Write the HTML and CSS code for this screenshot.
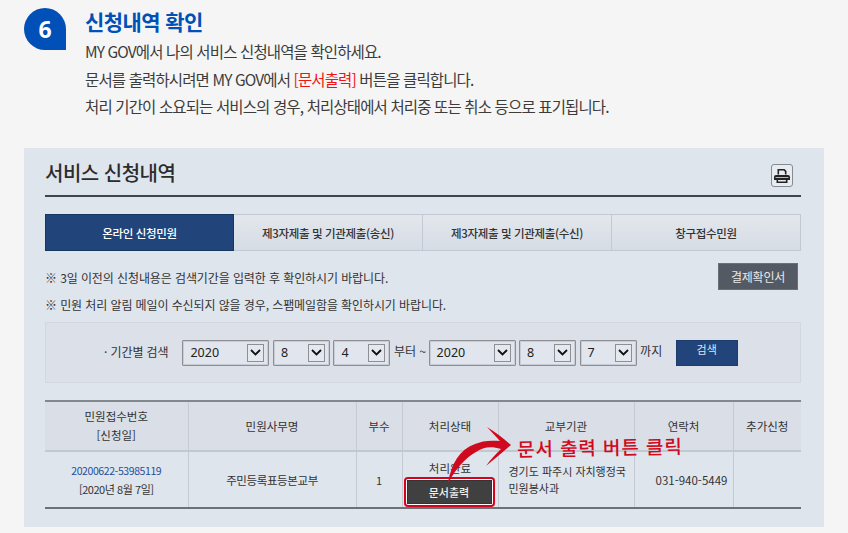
FILE: index.html
```html
<!DOCTYPE html>
<html lang="ko">
<head>
<meta charset="utf-8">
<title>신청내역 확인</title>
<link rel="stylesheet" href="styles.css">
</head>
<body>
<header class="step">
  <div class="badge">6</div>
  <div class="intro">
    <h1>신청내역 확인</h1>
    <p>MY GOV에서 나의 서비스 신청내역을 확인하세요.</p>
    <p>문서를 출력하시려면 MY GOV에서 <em>[문서출력]</em> 버튼을 클릭합니다.</p>
    <p>처리 기간이 소요되는 서비스의 경우, 처리상태에서 처리중 또는 취소 등으로 표기됩니다.</p>
  </div>
</header>
<main class="panel">
  <div class="title-row">
    <h2>서비스 신청내역</h2>
    <button class="print" aria-label="인쇄">
      <svg width="16" height="14" viewBox="0 0 16 14"><path fill="#222" d="M3.500 0h7l2 2v3.500h-1.600V2.700L9.800 1.600H5.100v3.900H3.500zM2 6h12a2 2 0 0 1 2 2v3h-2.500v3h-11v-3H0V8a2 2 0 0 1 2-2zm2.100 5v1.500h7.800V11zM1.600 8.200v.9h12.800v-.9z"/></svg>
    </button>
  </div>
  <nav class="tabs">
    <a class="tab active">온라인 신청민원</a>
    <a class="tab">제3자제출 및 기관제출(송신)</a>
    <a class="tab">제3자제출 및 기관제출(수신)</a>
    <a class="tab">창구접수민원</a>
  </nav>
  <div class="notes">
    <div class="notes-text">
      <p>※ 3일 이전의 신청내용은 검색기간을 입력한 후 확인하시기 바랍니다.</p>
      <p>※ 민원 처리 알림 메일이 수신되지 않을 경우, 스팸메일함을 확인하시기 바랍니다.</p>
    </div>
    <button class="confirm">결제확인서</button>
  </div>
  <form class="search">
    <span class="label">· 기간별 검색</span>
    <span class="sel w-year">2020<i class="arrow"><svg width="11" height="7" viewBox="0 0 11 7"><path d="M1 1l4.500 4.500L10 1" fill="none" stroke="#111" stroke-width="1.800"/></svg></i></span>
    <span class="sel w-small">8<i class="arrow"><svg width="11" height="7" viewBox="0 0 11 7"><path d="M1 1l4.500 4.500L10 1" fill="none" stroke="#111" stroke-width="1.800"/></svg></i></span>
    <span class="sel w-small">4<i class="arrow"><svg width="11" height="7" viewBox="0 0 11 7"><path d="M1 1l4.500 4.500L10 1" fill="none" stroke="#111" stroke-width="1.800"/></svg></i></span>
    <span class="word">부터 ~</span>
    <span class="sel w-year">2020<i class="arrow"><svg width="11" height="7" viewBox="0 0 11 7"><path d="M1 1l4.500 4.500L10 1" fill="none" stroke="#111" stroke-width="1.800"/></svg></i></span>
    <span class="sel w-small">8<i class="arrow"><svg width="11" height="7" viewBox="0 0 11 7"><path d="M1 1l4.500 4.500L10 1" fill="none" stroke="#111" stroke-width="1.800"/></svg></i></span>
    <span class="sel w-small">7<i class="arrow"><svg width="11" height="7" viewBox="0 0 11 7"><path d="M1 1l4.500 4.500L10 1" fill="none" stroke="#111" stroke-width="1.800"/></svg></i></span>
    <span class="word">까지</span>
    <button class="go" type="button">검색</button>
  </form>
  <div class="table-wrap">
    <table>
      <colgroup><col class="c1"><col class="c2"><col class="c3"><col class="c4"><col class="c5"><col class="c6"><col class="c7"></colgroup>
      <thead>
        <tr><th>민원접수번호<br>[신청일]</th><th>민원사무명</th><th>부수</th><th>처리상태</th><th>교부기관</th><th>연락처</th><th>추가신청</th></tr>
      </thead>
      <tbody>
        <tr>
          <td class="rcpt"><a class="num">20200622-53985119</a><br>[2020년 8월 7일]</td>
          <td class="big">주민등록표등본교부</td>
          <td>1</td>
          <td class="state">처리완료<span class="hl"><button class="doc" type="button">문서출력</button></span></td>
          <td class="org">경기도 파주시 자치행정국<br>민원봉사과</td>
          <td class="tel">031-940-5449</td>
          <td></td>
        </tr>
      </tbody>
    </table>
    <svg class="curve" width="70" height="60" viewBox="0 0 70 60"><path fill="#d00a1e" d="M3 57C7 38 14 25 30 19C37 16 44 15 55 16L42 2C50 7 58 13 66 20C58 27 50 34 41 41C46 34 51 29 56 24C46 21 38 22 31 27C20 33 10 45 4 57Z"/></svg>
    <span class="scribble">문서 출력 버튼 클릭</span>
  </div>
</main>
</body>
</html>
```
FILE: styles.css
```css
* { box-sizing: border-box; }
html, body { margin: 0; height: 533px; overflow: hidden; }
body {
  background: #f5f5f5;
  font-family: "Noto Sans CJK KR", "Noto Sans", sans-serif;
  color: #333;
  width: 848px;
}
p, h1, h2 { margin: 0; }
.step { display: flex; padding: 8px 0 0 24px; height: 148px; }
.badge {
  width: 42px; height: 42px;
  background: #0050b8; color: #fff;
  border-radius: 21px 21px 0 21px;
  display: flex; align-items: center; justify-content: center;
  font: 700 23px "Open Sans", sans-serif;
}
.intro { margin-left: 19px; margin-top: -1px; }
.intro h1 { font-size: 21px; line-height: 28px; font-weight: 700; color: #0050b8; letter-spacing: -0.6px; margin-bottom: 3px; }
.intro p { font-size: 15.500px; line-height: 27.500px; letter-spacing: -0.87px; color: #3c3c3c; font-weight: 400; }
.intro em { font-style: normal; color: #f01414; }
.panel { margin: 0 24px; width: 800px; height: 379px; background: #dfe5ed; padding: 0 23px 0 21px; position: relative; }
.title-row { height: 49px; border-bottom: 2px solid #3d4650; display: flex; justify-content: space-between; align-items: flex-start; padding-top: 11px; }
.title-row h2 { font-size: 20px; line-height: 28px; font-weight: 500; color: #2c2c2c; letter-spacing: -0.5px; }
.print { width: 22px; height: 23px; margin: 5px 8px 0 0; padding: 0; background: #e8ebf0; border: 1px solid #858b92; border-radius: 3px; display: flex; align-items: center; justify-content: center; }
.tabs { display: flex; margin-top: 17px; height: 37px; }
.tab {
  width: 189px; display: flex; align-items: center; justify-content: center;
  font-size: 11.500px; font-weight: 500; letter-spacing: -0.35px; color: #333;
  background: linear-gradient(#e3e7ed, #d6dce5);
  border: 1px solid #c3c9d2; border-left-width: 0;
}
.tab.active { background: #21457a; border: 1px solid #173763; color: #fff; }
.notes { display: flex; justify-content: space-between; margin-top: 13px; height: 58px; }
.notes-text p { font-size: 12px; line-height: 27px; color: #333; letter-spacing: -0.1px; }
.confirm { width: 80px; height: 27px; margin: -1px 3px 0 0; background: #545a64; border: 1px solid #6a7078; color: #e8e8e8; font: 400 12px "Noto Sans CJK KR", sans-serif; letter-spacing: -0.2px; padding: 0; }
.search {
  height: 61px; background: #dbe0e9; border: 1px solid #d2d7e1;
  display: flex; align-items: center; padding-left: 58px; font-size: 12px;
}
.label { margin-right: 14px; letter-spacing: -0.1px; position: relative; top: -1px; }
.sel {
  height: 26px; border: 1px solid #8d8f94; border-radius: 1px; background: #e1e6ee; position: relative;
  display: flex; align-items: center; padding-left: 7px;
  font: 400 12.500px "Noto Sans", sans-serif; color: #222; margin-right: 3.500px; box-shadow: inset 0 0 0 1px #c8ccd4;
}
.w-year { width: 87px; }
.w-small { width: 57px; }
.arrow { position: absolute; right: 4px; top: 3px; width: 17px; height: 18px; border: 1px solid #8d8f94; background: #e4e8ef; display: flex; align-items: center; justify-content: center; }
.word { margin-right: 2.500px; position: relative; top: -2px; }
.go { width: 62px; height: 26px; margin-left: 11px; background: #21457a; color: #dfe5ee; border: 1px solid #1c3c6c; font: 400 11px/16px "Noto Sans CJK KR", sans-serif; padding: 0 0 7px; }
.table-wrap { position: relative; margin-top: 17px; width: 756px; }
table { width: 756px; border-collapse: collapse; table-layout: fixed; border-top: 2px solid #83878f; border-bottom: 2px solid #6c7078; font-size: 11.500px; color: #333; }
.c1 { width: 143px; } .c2 { width: 168px; } .c3 { width: 46px; } .c4 { width: 96px; } .c5 { width: 136px; } .c6 { width: 99px; } .c7 { width: 68px; }
th, td { border-left: 1px solid #c5cad2; text-align: center; padding: 0; font-weight: 400; }
th:first-child, td:first-child { border-left: 0; }
th { height: 50px; background: #d9dee7; border-bottom: 2px solid #c3c8d0; line-height: 19px; }
td { height: 57px; line-height: 20px; font-size: 11px; }
.rcpt { line-height: 18px; letter-spacing: -0.45px; }
.num { color: #1f4f96; font-size: 10.500px; letter-spacing: -0.4px; }
.big { font-size: 11.500px; letter-spacing: -0.4px; }
.state { vertical-align: top; padding-top: 6px; line-height: 20px; font-size: 11.500px; }
.hl { display: block; width: 91px; height: 30px; margin: -1px 0 0 1px; padding: 1px; border: 2px solid #d4021d; border-radius: 4px; background: #fff; }
.doc { display: block; width: 100%; height: 24px; background: #404040; border: 1px solid #333; color: #f0f0f0; font: 500 11px "Noto Sans CJK KR", sans-serif; padding: 0; }
.org { text-align: left; padding-left: 10px; font-size: 11px; line-height: 17px; }
.tel { font-size: 11.500px; padding-left: 16px; }
.curve { position: absolute; left: 400px; top: 25px; }
.scribble { position: absolute; left: 472px; top: 35px; font: 500 19px/23px "Noto Sans CJK KR", sans-serif; color: #d00a1e; letter-spacing: 0.9px; transform: rotate(-1deg); }
```
